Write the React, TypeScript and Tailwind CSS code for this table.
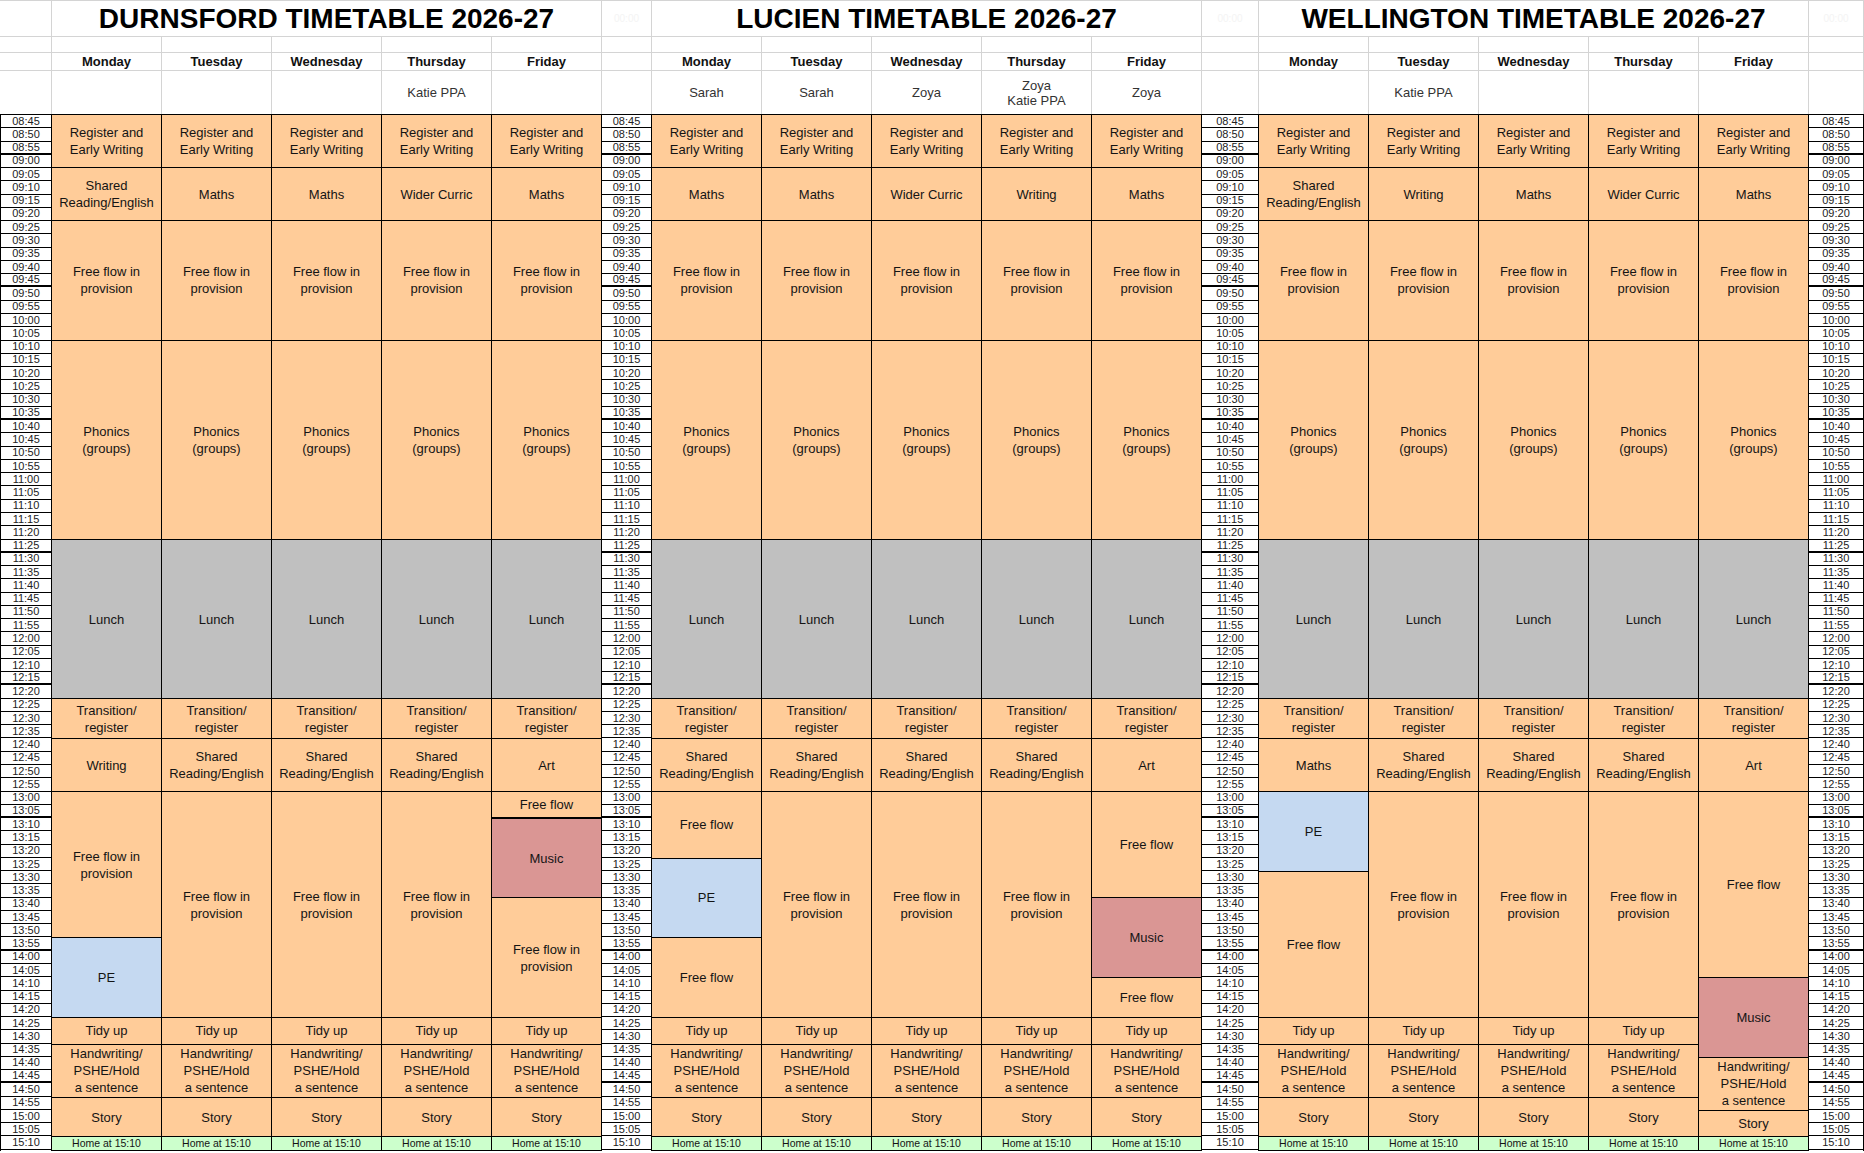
import React from "react";

type Block = { t: string; n: number; c?: "g" | "m" | "p" | "h"; thick?: boolean };

const ROW = 13.28;

const SRE = "Shared\nReading/English";
const FFIP = "Free flow in\nprovision";
const FF: Block[] = [{ t: FFIP, n: 17 }];

const bg: Record<string, string> = {
  o: "bg-[#ffcc99]",
  g: "bg-[#c0c0c0]",
  m: "bg-[#da9694]",
  p: "bg-[#c5d9f1]",
  h: "bg-[#ccffcc]",
};

function day(second: string, mid: string, afternoon: Block[], tail = true): Block[] {
  return [
    { t: "Register and\nEarly Writing", n: 4 },
    { t: second, n: 4 },
    { t: FFIP, n: 9 },
    { t: "Phonics\n(groups)", n: 15 },
    { t: "Lunch", n: 12, c: "g" },
    { t: "Transition/\nregister", n: 3 },
    { t: mid, n: 4 },
    ...afternoon,
    ...(tail
      ? [
          { t: "Tidy up", n: 2 },
          { t: "Handwriting/\nPSHE/Hold\na sentence", n: 4 },
          { t: "Story", n: 3 },
        ]
      : []),
    { t: "Home at 15:10", n: 1, c: "h" },
  ];
}

const sections = [
  {
    title: "DURNSFORD TIMETABLE 2026-27",
    teachers: ["", "", "", "Katie PPA", ""],
    days: [
      day(SRE, "Writing", [{ t: FFIP, n: 11 }, { t: "PE", n: 6, c: "p" }]),
      day("Maths", SRE, FF),
      day("Maths", SRE, FF),
      day("Wider Curric", SRE, FF),
      day("Maths", "Art", [
        { t: "Free flow", n: 2, thick: true },
        { t: "Music", n: 6, c: "m" },
        { t: FFIP, n: 9 },
      ]),
    ],
  },
  {
    title: "LUCIEN TIMETABLE 2026-27",
    teachers: ["Sarah", "Sarah", "Zoya", "Zoya\nKatie PPA", "Zoya"],
    days: [
      day("Maths", SRE, [
        { t: "Free flow", n: 5 },
        { t: "PE", n: 6, c: "p" },
        { t: "Free flow", n: 6 },
      ]),
      day("Maths", SRE, FF),
      day("Wider Curric", SRE, FF),
      day("Writing", SRE, FF),
      day("Maths", "Art", [
        { t: "Free flow", n: 8 },
        { t: "Music", n: 6, c: "m" },
        { t: "Free flow", n: 3 },
      ]),
    ],
  },
  {
    title: "WELLINGTON TIMETABLE 2026-27",
    teachers: ["", "Katie PPA", "", "", ""],
    days: [
      day(SRE, "Maths", [{ t: "PE", n: 6, c: "p" }, { t: "Free flow", n: 11 }]),
      day("Writing", SRE, FF),
      day("Maths", SRE, FF),
      day("Wider Curric", SRE, FF),
      day(
        "Maths",
        "Art",
        [
          { t: "Free flow", n: 14 },
          { t: "Music", n: 6, c: "m" },
          { t: "Handwriting/\nPSHE/Hold\na sentence", n: 4 },
          { t: "Story", n: 2 },
        ],
        false
      ),
    ],
  },
];

const DAYS = ["Monday", "Tuesday", "Wednesday", "Thursday", "Friday"];

const times = Array.from({ length: 78 }, (_, i) => {
  const m = 525 + i * 5;
  return `${String(Math.floor(m / 60)).padStart(2, "0")}:${String(m % 60).padStart(2, "0")}`;
});

const grid = "border-r border-b border-[#d4d4d4]";

const TimeHead = ({ w, ghost }: { w: string; ghost?: boolean }) => (
  <div className={`flex flex-col ${w}`}>
    <div className={`h-[37px] flex items-center justify-center border-t border-[#d4d4d4] ${grid}`}>
      {ghost && <span className="text-[10px] text-[#f4f4f4]">00:00</span>}
    </div>
    <div className={`h-[16px] ${grid}`} />
    <div className={`h-[18px] ${grid}`} />
    <div className="h-[43px] border-r border-[#d4d4d4]" />
  </div>
);

const SectionHead = ({ title, teachers }: { title: string; teachers: string[] }) => (
  <div className="flex flex-col w-[550px]">
    <div
      className={`h-[37px] flex items-center justify-center pt-px border-t border-[#d4d4d4] ${grid} text-[28px] font-bold text-black`}
    >
      {title}
    </div>
    <div className="flex">
      {DAYS.map((d) => (
        <div key={d} className={`w-[110px] h-[16px] ${grid}`} />
      ))}
    </div>
    <div className="flex">
      {DAYS.map((d) => (
        <div
          key={d}
          className={`w-[110px] h-[18px] ${grid} flex items-center justify-center text-[13px] font-bold text-[#111]`}
        >
          {d}
        </div>
      ))}
    </div>
    <div className="flex">
      {teachers.map((t, i) => (
        <div
          key={i}
          className="w-[110px] h-[43px] border-r border-[#d4d4d4] flex items-center justify-center text-center whitespace-pre-line text-[13px] leading-[15px] text-[#333]"
        >
          {t}
        </div>
      ))}
    </div>
  </div>
);

const TimeCol = ({ w, first }: { w: string; first?: boolean }) => (
  <div className={`flex flex-col ${w} border-t border-r border-black ${first ? "border-l" : ""}`}>
    {times.map((t, i) => (
      <div
        key={t}
        style={{ height: ROW }}
        className={`flex items-center justify-center bg-white text-[11px] leading-none text-[#222] border-black ${
          i % 10 === 2 ? "border-b-2" : "border-b"
        }`}
      >
        {t}
      </div>
    ))}
  </div>
);

const DayCol = ({ blocks }: { blocks: Block[] }) => (
  <div className="flex flex-col w-[110px] border-t border-r border-black">
    {blocks.map((b, i) => (
      <div
        key={i}
        style={{ height: b.n * ROW }}
        className={`flex items-center justify-center text-center whitespace-pre-line overflow-hidden border-black ${
          b.thick ? "border-b-2" : "border-b"
        } ${bg[b.c ?? "o"]} ${
          b.c === "h" ? "text-[10.5px] leading-none" : "text-[13px] leading-[17px]"
        } text-[#141414]`}
      >
        {b.t}
      </div>
    ))}
  </div>
);

const timeWidths = ["w-[52px]", "w-[50px]", "w-[57px]", "w-[55px]"];

export default function App() {
  return (
    <div className="w-[1864px] h-[1153px] bg-white overflow-hidden font-['Liberation_Sans',Arial,sans-serif]">
      <div className="flex">
        {sections.map((s, i) => (
          <React.Fragment key={s.title}>
            <TimeHead w={timeWidths[i]} ghost={i > 0} />
            <SectionHead title={s.title} teachers={s.teachers} />
          </React.Fragment>
        ))}
        <TimeHead w={timeWidths[3]} ghost />
      </div>
      <div className="flex">
        {sections.map((s, i) => (
          <React.Fragment key={s.title}>
            <TimeCol w={timeWidths[i]} first={i === 0} />
            {s.days.map((d, j) => (
              <DayCol key={j} blocks={d} />
            ))}
          </React.Fragment>
        ))}
        <TimeCol w={timeWidths[3]} />
      </div>
    </div>
  );
}
